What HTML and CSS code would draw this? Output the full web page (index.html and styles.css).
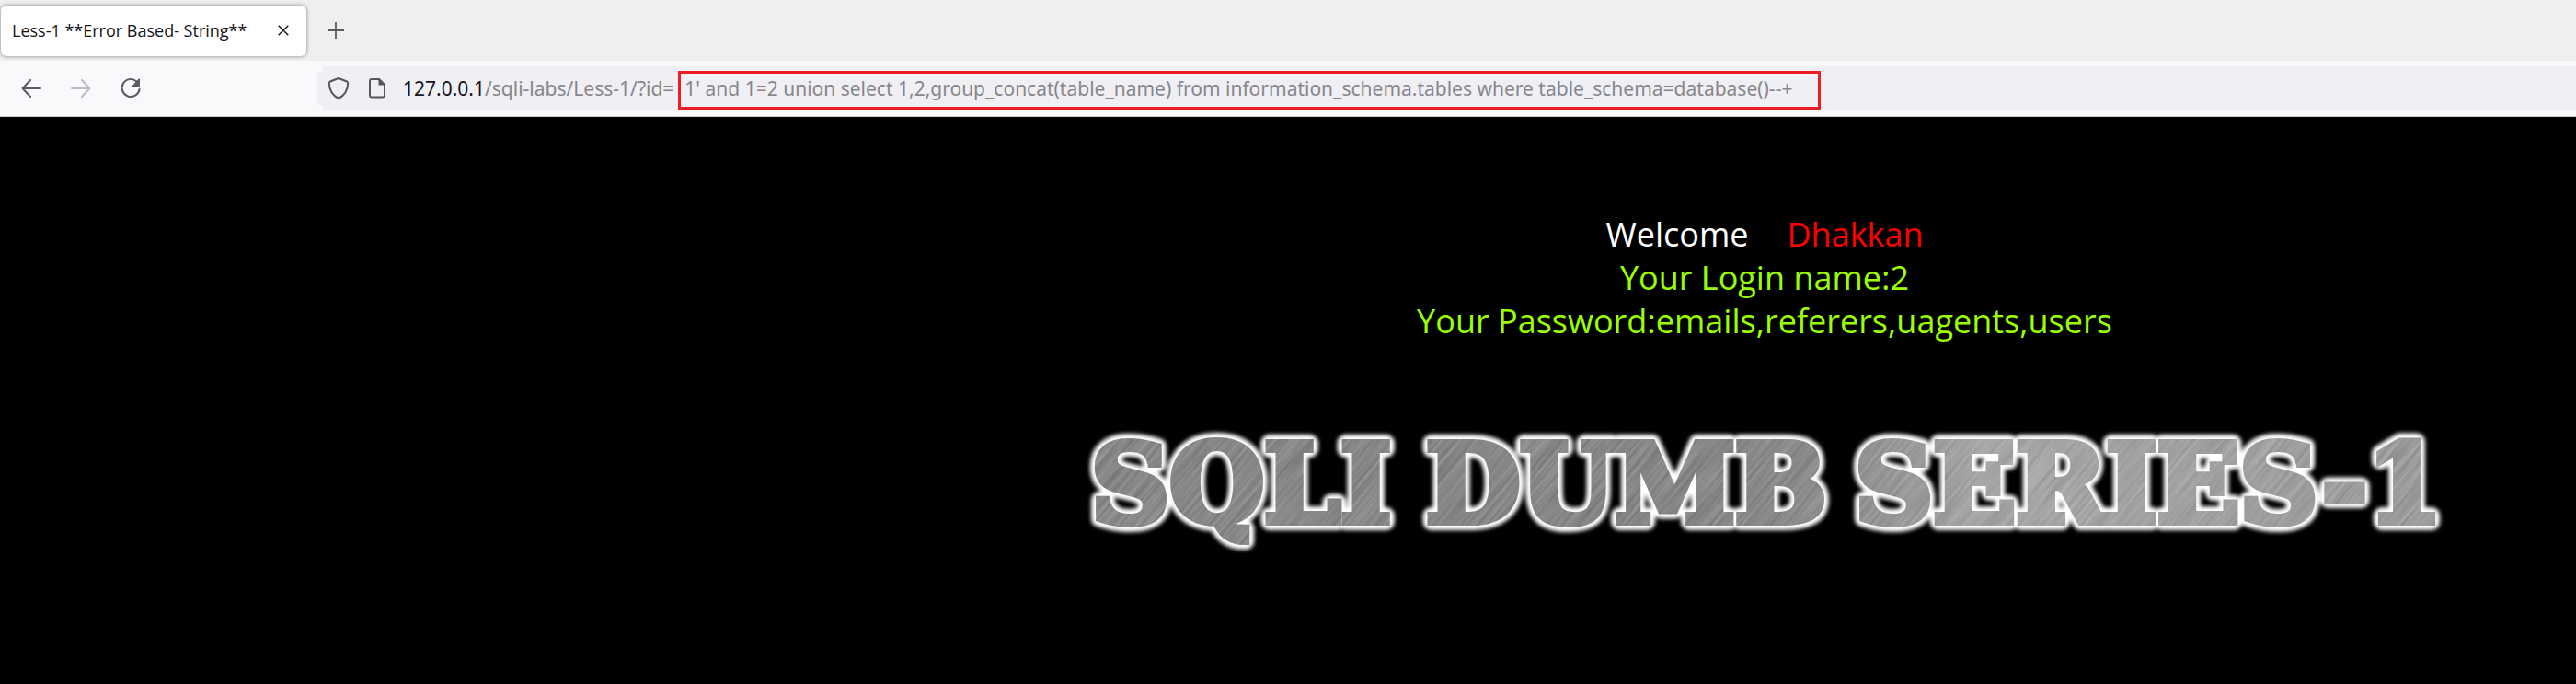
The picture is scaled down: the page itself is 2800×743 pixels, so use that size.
FILE: index.html
```html
<!DOCTYPE html>
<html lang="en">
<head>
<meta charset="utf-8">
<title>Less-1 **Error Based- String**</title>
<link rel="stylesheet" href="styles.css">
</head>
<body>
<header class="browser">
  <div class="tabs">
    <div class="tab">
      <span class="tab-title">Less-1 **Error Based- String**</span>
      <button class="tab-close" type="button" aria-label="Close tab"><svg width="12" height="12" viewBox="0 0 12 12"><path d="M.7.7 11.3 11.3M11.3.7.7 11.3" fill="none" stroke="#15141a" stroke-width="1.4"/></svg></button>
    </div>
    <button class="tab-new" type="button" aria-label="New tab"><svg width="18" height="18" viewBox="0 0 18 18"><path d="M9 0v18M0 9h18" fill="none" stroke="#5b5b66" stroke-width="1.8"/></svg></button>
  </div>
  <div class="toolbar">
    <nav class="nav">
      <button type="button" aria-label="Back"><svg width="22" height="20" viewBox="0 0 22 20"><path d="M10 1 1.5 10l8.5 9M1.5 10H21" fill="none" stroke="#5b5b66" stroke-width="2" stroke-linejoin="round" stroke-linecap="round"/></svg></button>
      <button type="button" aria-label="Forward" disabled><svg width="22" height="20" viewBox="0 0 22 20"><path d="M12 1l8.500 9-8.500 9M20.500 10H1" fill="none" stroke="#bcbcc3" stroke-width="2" stroke-linejoin="round" stroke-linecap="round"/></svg></button>
      <button type="button" aria-label="Reload"><svg width="24" height="24" viewBox="0 0 24 24"><path d="M18.500 4.500A9.500 9.500 0 1 0 21.500 13" fill="none" stroke="#5b5b66" stroke-width="2" stroke-linecap="round"/><path d="M22 2.200v7q0 .8-.8.800h-7q-1.400 0-.4-1l6.800-7.200q1.400-1.200 1.400.400z" fill="#5b5b66"/></svg></button>
    </nav>
    <div class="address">
      <svg class="shield" width="24" height="26" viewBox="0 0 24 26"><path d="M12 2 21 5.500Q22.300 6 22.200 7.500 22 18.500 12 24 2 18.500 1.800 7.500 1.700 6 3 5.500Z" fill="none" stroke="#55555c" stroke-width="2" stroke-linejoin="round"/></svg>
      <svg class="doc" width="20" height="24" viewBox="0 0 20 24"><path d="M12 2H4Q2 2 2 4V19Q2 21.500 4 21.500H16Q18 21.500 18 19V8Z" fill="none" stroke="#55555c" stroke-width="2" stroke-linejoin="round"/><path d="M11.500 1v7.500H19z" fill="#55555c"/></svg>
      <label class="url" for="query"><span class="host">127.0.0.1</span>/sqli-labs/Less-1/?id=</label>
      <input class="query" id="query" type="text" spellcheck="false" value="1' and 1=2 union select 1,2,group_concat(table_name) from information_schema.tables where table_schema=database()--+">
    </div>
  </div>
</header>
<main class="page">
  <p class="message"><span class="welcome">Welcome</span><span class="name">Dhakkan</span></p>
  <p class="message">Your Login name:2</p>
  <p class="message">Your Password:emails,referers,uagents,users</p>
  <svg class="logo" width="1510" height="150" viewBox="0 0 1510 150" role="img" aria-label="SQLI DUMB SERIES-1">
    <defs>
      <filter id="glow" x="-5%" y="-30%" width="110%" height="160%"><feGaussianBlur stdDeviation="2"/></filter>
      <filter id="brushed" x="0" y="0" width="100%" height="100%" color-interpolation-filters="sRGB">
        <feTurbulence type="fractalNoise" baseFrequency="0.012 0.3" numOctaves="3" seed="4"/>
        <feColorMatrix values=".22 0 0 0 .44  .22 0 0 0 .44  .22 0 0 0 .44  0 0 0 0 1"/>
      </filter>
      <linearGradient id="shine"><stop offset="0" stop-color="#000" stop-opacity=".04"/><stop offset=".4" stop-color="#000" stop-opacity=".04"/><stop offset=".65" stop-color="#fff" stop-opacity=".22"/><stop offset="1" stop-color="#fff" stop-opacity=".12"/></linearGradient>
      <g id="words"><text x="23" y="116">SQLI</text><text x="387" y="116">DUMB</text><text x="853" y="116">SERIES-1</text></g>
      <mask id="letters" maskUnits="userSpaceOnUse" x="0" y="0" width="1510" height="150"><use href="#words" fill="#fff" stroke="#fff" stroke-width="8"/></mask>
    </defs>
    <use href="#words" fill="#fff" stroke="#fff" stroke-width="18" stroke-linejoin="round" filter="url(#glow)"/>
    <g mask="url(#letters)">
      <rect x="-200" y="-800" width="1900" height="1900" transform="rotate(-50 755 75)" filter="url(#brushed)"/>
      <rect width="1510" height="150" fill="url(#shine)"/>
    </g>
  </svg>
</main>
</body>
</html>
```
FILE: styles.css
```css
* { box-sizing: border-box; }
body {
  margin: 0;
  min-height: 100vh;
  display: flex;
  flex-direction: column;
  background: #000;
  font-family: "Open Sans", "Noto Sans", sans-serif;
}
button {
  display: flex;
  align-items: center;
  justify-content: center;
  padding: 0;
  border: 0;
  background: none;
}
.tabs {
  display: flex;
  align-items: center;
  gap: 16px;
  height: 66px;
  padding: 0 1px;
  background: #efefef;
}
.tab {
  display: flex;
  align-items: center;
  justify-content: space-between;
  width: 332px;
  height: 55px;
  padding: 0 12px;
  border-radius: 6px;
  background: #fff;
  box-shadow: 0 0 4px #80808e;
}
.tab-title { font-size: 18px; white-space: nowrap; color: #15141a; }
.tab-close { width: 26px; height: 30px; }
.tab-new { width: 32px; height: 32px; }
.toolbar {
  display: flex;
  align-items: center;
  height: 61px;
  border-bottom: 1px solid #c4ccc8;
  background: #f9f9fb;
}
.nav {
  display: flex;
  gap: 22px;
  width: 345px;
  padding-left: 18px;
}
.nav button { width: 32px; height: 32px; }
.address {
  flex: 1;
  display: flex;
  align-items: center;
  height: 48px;
  padding-left: 11px;
  background: #f0eff4;
  clip-path: polygon(6px 0, 100% 0, 100% 100%, 6px 100%, 6px 42px, 0 42px, 0 6px, 6px 6px);
  font-family: "Noto Sans", "Open Sans", sans-serif;
  font-size: 21px;
  color: #87868b;
}
.doc { margin: 0 18px 0 20px; }
.url { margin-right: 5px; white-space: nowrap; }
.host { color: #15141a; }
.query {
  align-self: flex-end;
  width: 1242px;
  height: 42px;
  margin-bottom: 1px;
  padding: 0 4px 4px;
  border: 3px solid #ee1c25;
  outline: 0;
  background: none;
  font: inherit;
  color: inherit;
}
.page {
  display: flex;
  flex-direction: column;
  align-items: center;
  padding: 104px 0 0 1036px;
}
.message {
  margin: 0;
  font-size: 36px;
  line-height: 47px;
  color: #9f0;
}
.welcome { margin-right: 42px; color: #fff; }
.name { color: #f00; }
.logo {
  margin-top: 79px;
  font-family: "DejaVu Serif", serif;
  font-size: 118px;
  font-weight: 700;
}
```
